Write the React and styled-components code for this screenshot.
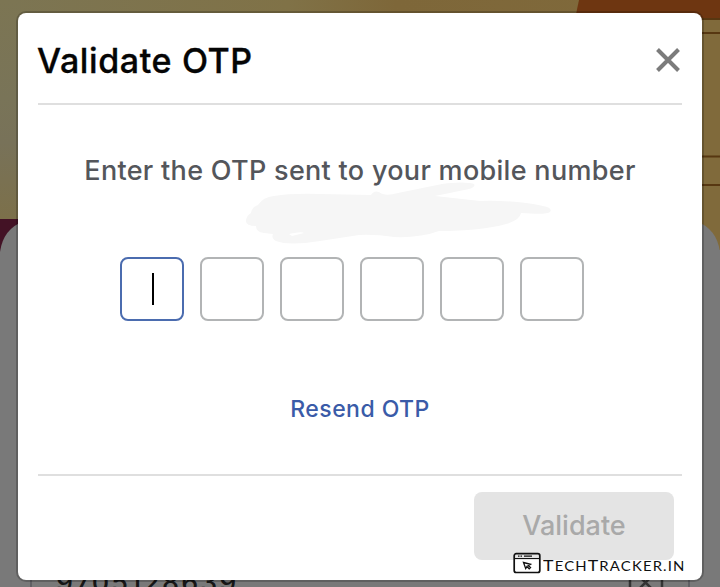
import React from "react";
import styled, { createGlobalStyle } from "styled-components";

const GlobalStyle = createGlobalStyle`
  *, *::before, *::after { box-sizing: border-box; }
  body { margin: 0; font-family: Inter, "Liberation Sans", sans-serif; }
  button { font: inherit; border: 0; padding: 0; background: none; }
`;

const Page = styled.main`
  position: relative;
  width: 720px;
  height: 587px;
  overflow: hidden;
  padding: 13px 18px 0;
  background: #797979;
`;

const Backdrop = styled.svg`
  position: absolute;
  inset: 0;
  width: 720px;
  height: 587px;
`;

const PhoneNumber = styled.span`
  position: absolute;
  left: 56px;
  top: 566px;
  font-size: 27px;
  line-height: 33px;
  font-weight: 500;
  letter-spacing: 2.1px;
  color: #161616;
`;

const Dialog = styled.section`
  position: relative;
  display: flex;
  flex-direction: column;
  height: 567px;
  padding: 0 20px;
  border-radius: 8px;
  background: #fff;
  box-shadow: 0 0 0 2px rgba(0, 0, 0, 0.2);
`;

const Header = styled.header`
  display: flex;
  align-items: center;
  justify-content: space-between;
  height: 92px;
  border-bottom: 2px solid #dfdfdf;
`;

const Title = styled.h1`
  margin: 6px 0 0 -1px;
  font-size: 34px;
  line-height: 42px;
  font-weight: 540;
  letter-spacing: 0.62px;
  -webkit-text-stroke: 0.35px #050505;
  white-space: nowrap;
  color: #050505;
`;

const CloseButton = styled.button`
  width: 28px;
  height: 28px;
  margin-top: 3px;
  svg { display: block; }
`;

const Body = styled.div`
  display: flex;
  flex-direction: column;
  align-items: center;
  height: 369px;
  padding-top: 49px;
`;

const Message = styled.p`
  margin: 0;
  font-size: 27px;
  line-height: 34px;
  font-weight: 500;
  letter-spacing: 0.3px;
  white-space: nowrap;
  color: #54565b;
`;

const Redaction = styled.svg`
  position: absolute;
  left: 226px;
  top: 167px;
  width: 310px;
  height: 66px;
`;

const CodeRow = styled.div`
  display: flex;
  gap: 16px;
  margin: 69px 16px 0 0;
`;

const CodeBox = styled.div`
  display: grid;
  place-items: center;
  width: 64px;
  height: 64px;
  border: 2px solid ${(p) => (p.$active ? "#4b6caf" : "#b2b4b5")};
  border-radius: 8px;
`;

const Caret = styled.span`
  width: 2px;
  height: 32px;
  margin-left: 2px;
  background: #000;
`;

const ResendLink = styled.button`
  margin-top: 73px;
  && {
    font-size: 23px;
    line-height: 30px;
    font-weight: 550;
  }
  letter-spacing: 0.45px;
  white-space: nowrap;
  color: #3a5ba8;
`;

const Footer = styled.footer`
  display: flex;
  justify-content: flex-end;
  padding: 16px 8px 0 0;
  border-top: 2px solid #dfdfdf;
`;

const SubmitButton = styled.button`
  width: 200px;
  height: 68px;
  padding-bottom: 2px;
  border-radius: 8px;
  background: #e4e4e4;
  && {
    font-size: 27px;
    font-weight: 500;
  }
  color: #a9a9a9;
`;

const Watermark = styled.div`
  position: absolute;
  left: 513px;
  top: 552px;
  display: flex;
  align-items: flex-start;
  gap: 2px;
  color: #101010;
  svg { flex: none; }
`;

const WatermarkText = styled.span`
  display: flex;
  align-items: baseline;
  margin-top: 3px;
  font-family: Lato, sans-serif;
  font-size: 13px;
  line-height: 20px;
  letter-spacing: 1px;
  text-transform: uppercase;
  white-space: nowrap;
  transform: scaleX(1.145);
  transform-origin: left;
`;

const Initial = styled.span`
  font-size: 15.500px;
`;

function Scenery() {
  return (
    <Backdrop viewBox="0 0 720 587" aria-hidden="true">
      <defs>
        <linearGradient id="wallTop" x1="0" x2="1">
          <stop offset="0" stopColor="#7c7553" />
          <stop offset="0.4" stopColor="#807247" />
          <stop offset="0.55" stopColor="#7e6739" />
          <stop offset="1" stopColor="#806a3c" />
        </linearGradient>
        <linearGradient id="wallLeft" x1="0" x2="0" y1="0" y2="1">
          <stop offset="0" stopColor="#7c7553" />
          <stop offset="0.45" stopColor="#797458" />
          <stop offset="0.65" stopColor="#787259" />
          <stop offset="1" stopColor="#7c704a" />
        </linearGradient>
      </defs>
      <path d="M0 0h720v250H0z" fill="url(#wallTop)" />
      <path d="M0 0h20v219H0z" fill="url(#wallLeft)" />
      <path d="M579 0h141v19H575z" fill="#6e3611" />
      <path d="M700 19h20v231h-20z" fill="#806a3b" />
      <path d="M700 19h20M700 33h20M700 156.500h20M700 185h20" stroke="#573711" strokeWidth="2" />
      <path d="M0 219h20v45H0z" fill="#431225" />
      <path d="M0 587V252Q3 229 24 221H696Q717 229 720 252V587z" fill="#797979" />
      <path d="M31 578v9M689 578v9" stroke="#606064" strokeWidth="2" />
      <path d="M630 576v11M662 576v11M640 577l11 11M651 577l-11 11" fill="none" stroke="#343434" strokeWidth="2.500" />
    </Backdrop>
  );
}

const codeSlots = [0, 1, 2, 3, 4, 5];

export default function App() {
  return (
    <>
      <GlobalStyle />
      <Page>
        <Scenery />
        <PhoneNumber>9705128639</PhoneNumber>
        <Dialog role="dialog" aria-label="Validate OTP">
          <Header>
            <Title>Validate OTP</Title>
            <CloseButton aria-label="Close">
              <svg width="28" height="28" viewBox="0 0 28 28" stroke="#7b7b7b" strokeWidth="4">
                <path d="M3.500 3.500l21 21M24.500 3.500l-21 21" />
              </svg>
            </CloseButton>
          </Header>
          <Body>
            <Message>Enter the OTP sent to your mobile number</Message>
            <CodeRow>
              {codeSlots.map((i) => (
                <CodeBox key={i} $active={i === 0}>
                  {i === 0 && <Caret />}
                </CodeBox>
              ))}
            </CodeRow>
            <ResendLink>Resend OTP</ResendLink>
          </Body>
          <Footer>
            <SubmitButton disabled>Validate</SubmitButton>
          </Footer>
          <Redaction viewBox="244 180 310 66" aria-hidden="true">
            <path
              fill="#f6f6f6"
              fillRule="evenodd"
              d="M246 220Q247 215 251 213Q252 207 258 205Q263 197 274 196Q292 193 320 194L371 195Q374 190 379 192Q385 197 398 193L442 184Q464 181 474 184Q476 187 469 189L435 196L480 201Q516 200 543 206Q553 208 550 212Q547 215 521 213Q520 220 506 224Q481 231 439 231Q420 238 394 237Q373 234 359 235L320 241Q289 246 276 241Q271 238 273 234L264 233Q256 232 256 226Q245 226 246 220ZM289 234L292 236L304 233Q302 231 289 234Z"
            />
          </Redaction>
        </Dialog>
        <Watermark>
          <svg width="28" height="22" viewBox="0 0 28 22" fill="none" stroke="#101010" strokeWidth="1.700">
            <rect x="1.200" y="1.700" width="25.600" height="18.800" rx="2" />
            <path d="M1.500 6.500h25M5 4.100h1.500M7.500 4.100h1.500M11 4.100h8" strokeWidth="1.200" />
            <path d="M10.500 10.500l7 1.800-2.300 1.300 2.300 2-1.300 1.200-2.300-2.200-1.200 1.900z" strokeWidth="1.300" />
          </svg>
          <WatermarkText>
            <Initial>T</Initial>ech<Initial>T</Initial>racker.in
          </WatermarkText>
        </Watermark>
      </Page>
    </>
  );
}
